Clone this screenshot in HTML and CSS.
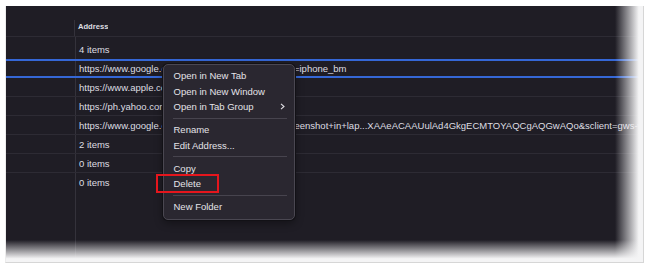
FILE: index.html
```html
<!DOCTYPE html>
<html lang="en">
<head>
    <meta charset="UTF-8">
    <title>Bookmarks</title>
    <link rel="stylesheet" href="styles.css">
</head>
<body>
    <div class="frame">
        <div class="panel">
            <div class="row header">
                <div class="cell-name"></div>
                <div class="cell-addr">Address</div>
            </div>
            <div class="row first">
                <div class="cell-name"></div>
                <div class="cell-addr">4 items</div>
            </div>
            <div class="row drop">
                <div class="cell-name"></div>
                <div class="cell-addr">https://www.google.com/search?q=iphone&amp;hl=en&amp;t=iphone_bm</div>
            </div>
            <div class="row">
                <div class="cell-name"></div>
                <div class="cell-addr">https://www.apple.com/</div>
            </div>
            <div class="row">
                <div class="cell-name"></div>
                <div class="cell-addr">https://ph.yahoo.com/</div>
            </div>
            <div class="row">
                <div class="cell-name"></div>
                <div class="cell-addr">https://www.google.com/search?q=how+to+get+scre<span>enshot+in+lap...XAAeACAAUulAd4GkgECMTOYAQCgAQGwAQo&amp;sclient=gws-wiz</span></div>
            </div>
            <div class="row">
                <div class="cell-name"></div>
                <div class="cell-addr">2 items</div>
            </div>
            <div class="row">
                <div class="cell-name"></div>
                <div class="cell-addr">0 items</div>
            </div>
            <div class="row last">
                <div class="cell-name"></div>
                <div class="cell-addr">0 items</div>
            </div>
            <div class="row filler">
                <div class="cell-name"></div>
                <div class="cell-addr"></div>
            </div>
        </div>

        <div class="fade-right"></div>
        <div class="fade-bottom"></div>

        <div class="menu">
            <div class="item">Open in New Tab</div>
            <div class="item">Open in New Window</div>
            <div class="item">Open in Tab Group
                <svg class="chevron" width="5" height="7" viewBox="0 0 5 7"><polyline points="1,0.8 4,3.5 1,6.2" fill="none" stroke="#e2e1e6" stroke-width="1.1"/></svg>
            </div>
            <div class="sep"></div>
            <div class="item">Rename</div>
            <div class="item">Edit Address...</div>
            <div class="sep"></div>
            <div class="item">Copy</div>
            <div class="item">Delete</div>
            <div class="sep"></div>
            <div class="item">New Folder</div>
        </div>

        <div class="mark"></div>
    </div>
</body>
</html>
```

FILE: styles.css
```css
body {
    margin: 0;
    background: #ffffff;
    font-family: "Liberation Sans", Arial, sans-serif;
}
.frame {
    position: relative;
    margin: 6px 0 0 5px;
    width: 637px;
    height: 256px;
    border-left: 1px solid #ececec;
    border-right: 1px solid #d6d6d6;
    border-bottom: 1px solid #d6d6d6;
}
.panel {
    display: flex;
    flex-direction: column;
    height: 100%;
    background: #1f1d25;
    color: #dedde2;
    font-size: 9.5px;
    overflow: hidden;
}
.row {
    display: flex;
    height: 18px;
    border-bottom: 1px solid #2d2b34;
    flex-shrink: 0;
}
.cell-name {
    width: 69px;
    flex-shrink: 0;
    border-right: 1px solid #34323b;
}
.cell-addr {
    display: flex;
    align-items: center;
    padding-left: 3px;
    white-space: nowrap;
    overflow: hidden;
}
.header {
    height: 30px;
}
.header .cell-name {
    border-right: none;
    box-shadow: inset -1px 0 0 #34323b;
    margin-top: 14px;
}
.header .cell-addr {
    align-items: flex-end;
    padding-bottom: 5px;
    font-size: 7.6px;
    font-weight: bold;
}
.first {
    height: 22px;
    border-bottom: none;
}
.first .cell-addr {
    padding-top: 3px;
}
.drop {
    height: 15px;
    border-top: 2px solid #3567d6;
    border-bottom: 2px solid #3567d6;
}
.last {
    border-bottom: none;
}
.filler {
    flex: 1;
    border-bottom: none;
}
.fade-right {
    position: absolute;
    top: 0;
    right: 0;
    bottom: 0;
    width: 28px;
    background: linear-gradient(to right, rgba(244, 244, 245, 0), #f4f4f5 85%);
}
.fade-bottom {
    position: absolute;
    left: 0;
    right: 0;
    bottom: 0;
    height: 22px;
    background: linear-gradient(to bottom, rgba(244, 244, 245, 0), #f4f4f5 85%);
}
.menu {
    position: absolute;
    left: 157px;
    top: 58px;
    width: 130px;
    height: 151px;
    padding: 3px 0 0;
    box-sizing: content-box;
    background: #2a2730;
    border: 1px solid #4a4751;
    border-radius: 5px;
    box-shadow: 0 0 0 1px #121116, 0 3px 8px rgba(0, 0, 0, 0.4);
    color: #e4e3e8;
    font-size: 9.5px;
}
.item {
    display: flex;
    align-items: center;
    justify-content: space-between;
    height: 15.5px;
    padding: 0 9px 0 9.5px;
}
.chevron {
    display: block;
}
.sep {
    height: 1px;
    margin: 3.2px 7px 3.3px 8.5px;
    background: #47444e;
}
.mark {
    position: absolute;
    left: 150px;
    top: 168px;
    width: 59px;
    height: 15px;
    border: 2px solid #e5161d;
}
```
